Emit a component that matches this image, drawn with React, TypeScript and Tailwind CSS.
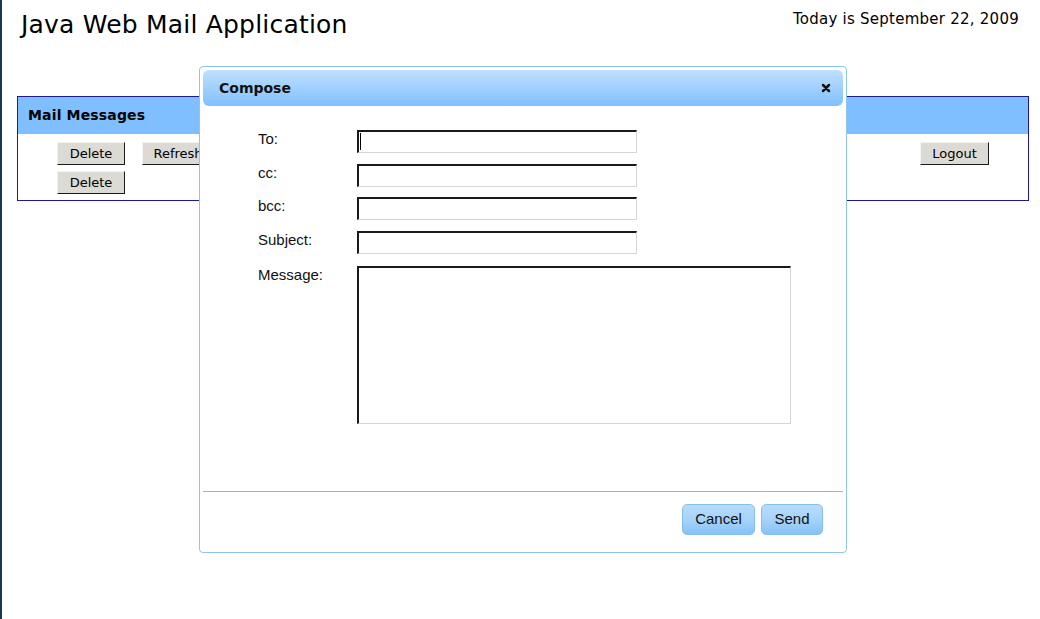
import React from "react";

const dv = { fontFamily: '"DejaVu Sans", Verdana, sans-serif' };
const lib = { fontFamily: '"Liberation Sans", Arial, sans-serif' };

function GrayButton({ children, className = "" }: { children: React.ReactNode; className?: string }) {
  return (
    <button
      className={
        "h-[23px] bg-[#dcdad5] text-[13px] text-black leading-none border-t border-l border-t-[#f4f3f1] border-l-[#f4f3f1] border-b border-r border-b-[#1a1a1a] border-r-[#1a1a1a] " +
        className
      }
      style={dv}
    >
      {children}
    </button>
  );
}

function Field({ label, top }: { label: string; top?: boolean }) {
  return (
    <div className="flex items-start h-[33.7px]">
      <div className="w-[99px] text-[15px] leading-[18px] text-[#111]" style={lib}>
        {label}
      </div>
      <div className="w-[280px] h-[23px] bg-white border-t-2 border-l-2 border-t-[#1a1a1a] border-l-[#1a1a1a] border-b border-r border-b-[#d6d6d6] border-r-[#d6d6d6] relative">
        {top && <div className="absolute left-[1px] top-[1px] w-[1px] h-[17px] bg-black" />}
      </div>
    </div>
  );
}

function BlueButton({ children, className = "" }: { children: React.ReactNode; className?: string }) {
  return (
    <button
      className={
        "h-[31px] rounded-[5px] border border-[#86bfe9] bg-gradient-to-b from-[#b7dcfb] via-[#a7d3f9] to-[#84c2f8] text-[15px] text-[#111] " +
        className
      }
      style={lib}
    >
      {children}
    </button>
  );
}

export default function App() {
  return (
    <div className="relative w-[1040px] h-[619px] bg-white border-l-[2px] border-l-[#1d3550] overflow-hidden">
      {/* header */}
      <div className="flex justify-between items-start h-[96px]">
        <div className="pl-[19px] pt-[10px] text-[25px] leading-[30px] tracking-[0.2px] text-black" style={dv}>
          Java Web Mail Application
        </div>
        <div className="pr-[21px] pt-[9px] text-[15px] leading-[20px] tracking-[0.25px] text-black" style={dv}>
          Today is September 22, 2009
        </div>
      </div>

      {/* mail messages panel */}
      <div className="ml-[15px] mr-[11px] h-[105px] border border-[#1a1a9a] flex flex-col">
        <div className="h-[37px] bg-[#7fbfff] flex items-center pl-[10px]">
          <span className="text-[14px] font-bold text-black tracking-[0.15px]" style={dv}>
            Mail Messages
          </span>
        </div>
        <div className="flex justify-between pt-[8px] pl-[39px] pr-[39px]">
          <div className="flex flex-col gap-[6px]">
            <div className="flex gap-[17px]">
              <GrayButton className="w-[68px]">Delete</GrayButton>
              <GrayButton className="w-[72px]">Refresh</GrayButton>
            </div>
            <GrayButton className="w-[68px]">Delete</GrayButton>
          </div>
          <GrayButton className="w-[69px]">Logout</GrayButton>
        </div>
      </div>

      {/* compose dialog */}
      <div className="absolute left-[197px] top-[66px] w-[648px] h-[487px] bg-white border border-[#8ec5ea] rounded-[4px] p-[3px] flex flex-col">
        <div className="h-[36px] rounded-[6px] bg-gradient-to-b from-[#bfe0ff] to-[#80c0ff] flex items-center justify-between pl-[16px] pr-[12px]">
          <span className="text-[14px] font-bold text-[#111]" style={dv}>
            Compose
          </span>
          <svg width="10" height="10" viewBox="0 0 10 10">
            <path d="M2 2 L8 8 M8 2 L2 8" stroke="#111" strokeWidth="2.5" strokeLinecap="round" />
          </svg>
        </div>

        <div className="pl-[55px] pt-[24px] flex-1">
          <Field label="To:" top />
          <Field label="cc:" />
          <Field label="bcc:" />
          <Field label="Subject:" />
          <div className="flex items-start mt-[1px]">
            <div className="w-[99px] text-[15px] leading-[18px] text-[#111]" style={lib}>
              Message:
            </div>
            <div className="w-[434px] h-[158px] bg-white border-t-2 border-l-2 border-t-[#1a1a1a] border-l-[#1a1a1a] border-b border-r border-b-[#d6d6d6] border-r-[#d6d6d6]" />
          </div>
        </div>

        <div className="h-[1px] bg-[#86bde0]" />
        <div className="h-[57px] flex justify-end items-start pt-[12px] pr-[20px] gap-[6px]">
          <BlueButton className="w-[73px]">Cancel</BlueButton>
          <BlueButton className="w-[62px]">Send</BlueButton>
        </div>
      </div>
    </div>
  );
}
